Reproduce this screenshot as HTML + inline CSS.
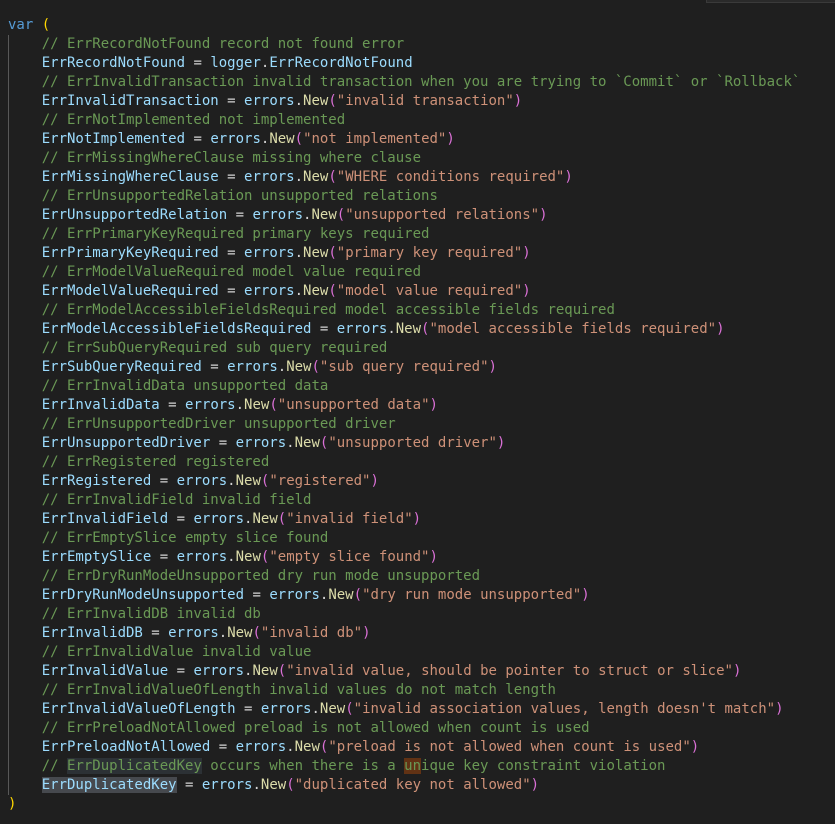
<!DOCTYPE html>
<html><head><meta charset="utf-8"><style>
html,body{margin:0;padding:0;background:#1f1f1f;width:835px;height:824px;overflow:hidden}
#top{position:absolute;left:706px;top:0;width:129px;height:2px;background:#2a2a2a;border-bottom:1px solid #3a3a3a;border-left:1px solid #3a3a3a}
#guide{position:absolute;left:8px;top:35px;width:1px;height:760px;background:#585858}
pre{position:absolute;left:8px;top:16px;margin:0;font-family:"DejaVu Sans Mono","Liberation Mono",monospace;font-size:14px;line-height:19px;color:#d4d4d4}
.k{color:#569cd6}.y{color:#ffd700}.v{color:#9cdcfe}.c{color:#6a9955}.f{color:#dcdcaa}.p{color:#da70d6}.s{color:#ce9178}
.h1{background:#2c3135}.h2{background:#613214}.sel{background:#46494e}
</style></head><body><div id="top"></div><div id="guide"></div><pre><span class="k">var</span> <span class="y">(</span>
    <span class="c">// ErrRecordNotFound record not found error</span>
    <span class="v">ErrRecordNotFound</span> = <span class="v">logger</span>.<span class="v">ErrRecordNotFound</span>
    <span class="c">// ErrInvalidTransaction invalid transaction when you are trying to `Commit` or `Rollback`</span>
    <span class="v">ErrInvalidTransaction</span> = <span class="v">errors</span>.<span class="f">New</span><span class="p">(</span><span class="s">"invalid transaction"</span><span class="p">)</span>
    <span class="c">// ErrNotImplemented not implemented</span>
    <span class="v">ErrNotImplemented</span> = <span class="v">errors</span>.<span class="f">New</span><span class="p">(</span><span class="s">"not implemented"</span><span class="p">)</span>
    <span class="c">// ErrMissingWhereClause missing where clause</span>
    <span class="v">ErrMissingWhereClause</span> = <span class="v">errors</span>.<span class="f">New</span><span class="p">(</span><span class="s">"WHERE conditions required"</span><span class="p">)</span>
    <span class="c">// ErrUnsupportedRelation unsupported relations</span>
    <span class="v">ErrUnsupportedRelation</span> = <span class="v">errors</span>.<span class="f">New</span><span class="p">(</span><span class="s">"unsupported relations"</span><span class="p">)</span>
    <span class="c">// ErrPrimaryKeyRequired primary keys required</span>
    <span class="v">ErrPrimaryKeyRequired</span> = <span class="v">errors</span>.<span class="f">New</span><span class="p">(</span><span class="s">"primary key required"</span><span class="p">)</span>
    <span class="c">// ErrModelValueRequired model value required</span>
    <span class="v">ErrModelValueRequired</span> = <span class="v">errors</span>.<span class="f">New</span><span class="p">(</span><span class="s">"model value required"</span><span class="p">)</span>
    <span class="c">// ErrModelAccessibleFieldsRequired model accessible fields required</span>
    <span class="v">ErrModelAccessibleFieldsRequired</span> = <span class="v">errors</span>.<span class="f">New</span><span class="p">(</span><span class="s">"model accessible fields required"</span><span class="p">)</span>
    <span class="c">// ErrSubQueryRequired sub query required</span>
    <span class="v">ErrSubQueryRequired</span> = <span class="v">errors</span>.<span class="f">New</span><span class="p">(</span><span class="s">"sub query required"</span><span class="p">)</span>
    <span class="c">// ErrInvalidData unsupported data</span>
    <span class="v">ErrInvalidData</span> = <span class="v">errors</span>.<span class="f">New</span><span class="p">(</span><span class="s">"unsupported data"</span><span class="p">)</span>
    <span class="c">// ErrUnsupportedDriver unsupported driver</span>
    <span class="v">ErrUnsupportedDriver</span> = <span class="v">errors</span>.<span class="f">New</span><span class="p">(</span><span class="s">"unsupported driver"</span><span class="p">)</span>
    <span class="c">// ErrRegistered registered</span>
    <span class="v">ErrRegistered</span> = <span class="v">errors</span>.<span class="f">New</span><span class="p">(</span><span class="s">"registered"</span><span class="p">)</span>
    <span class="c">// ErrInvalidField invalid field</span>
    <span class="v">ErrInvalidField</span> = <span class="v">errors</span>.<span class="f">New</span><span class="p">(</span><span class="s">"invalid field"</span><span class="p">)</span>
    <span class="c">// ErrEmptySlice empty slice found</span>
    <span class="v">ErrEmptySlice</span> = <span class="v">errors</span>.<span class="f">New</span><span class="p">(</span><span class="s">"empty slice found"</span><span class="p">)</span>
    <span class="c">// ErrDryRunModeUnsupported dry run mode unsupported</span>
    <span class="v">ErrDryRunModeUnsupported</span> = <span class="v">errors</span>.<span class="f">New</span><span class="p">(</span><span class="s">"dry run mode unsupported"</span><span class="p">)</span>
    <span class="c">// ErrInvalidDB invalid db</span>
    <span class="v">ErrInvalidDB</span> = <span class="v">errors</span>.<span class="f">New</span><span class="p">(</span><span class="s">"invalid db"</span><span class="p">)</span>
    <span class="c">// ErrInvalidValue invalid value</span>
    <span class="v">ErrInvalidValue</span> = <span class="v">errors</span>.<span class="f">New</span><span class="p">(</span><span class="s">"invalid value, should be pointer to struct or slice"</span><span class="p">)</span>
    <span class="c">// ErrInvalidValueOfLength invalid values do not match length</span>
    <span class="v">ErrInvalidValueOfLength</span> = <span class="v">errors</span>.<span class="f">New</span><span class="p">(</span><span class="s">"invalid association values, length doesn't match"</span><span class="p">)</span>
    <span class="c">// ErrPreloadNotAllowed preload is not allowed when count is used</span>
    <span class="v">ErrPreloadNotAllowed</span> = <span class="v">errors</span>.<span class="f">New</span><span class="p">(</span><span class="s">"preload is not allowed when count is used"</span><span class="p">)</span>
    <span class="c">// <span class="h1">ErrDuplicatedKey</span> occurs when there is a <span class="h2">un</span>ique key constraint violation</span>
    <span class="v sel">ErrDuplicatedKey</span> = <span class="v">errors</span>.<span class="f">New</span><span class="p">(</span><span class="s">"duplicated key not allowed"</span><span class="p">)</span>
<span class="y">)</span></pre></body></html>
